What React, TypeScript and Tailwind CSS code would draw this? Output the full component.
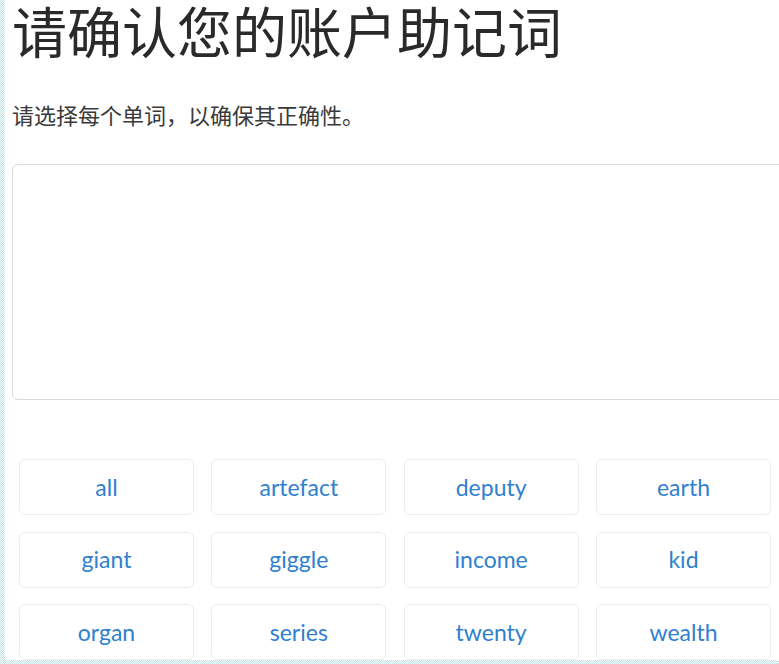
import React from "react";

const words = [
  "all", "artefact", "deputy", "earth",
  "giant", "giggle", "income", "kid",
  "organ", "series", "twenty", "wealth",
];

export default function App() {
  return (
    <div className="relative flex h-[664px] w-[779px] overflow-hidden bg-white">
      <div className="w-[5px] shrink-0 bg-[image:repeating-conic-gradient(#bfe0e0_0_25%,#ffffff_0_50%)] bg-[length:2px_2px]" />
      <div className="flex shrink-0 flex-col pl-[7px]">
        <h1
          className="m-0 mt-[-2px] h-[62px] text-[55px] leading-[62px] font-normal text-[#2a2a2a] whitespace-nowrap"
          style={{ fontFamily: '"Noto Sans CJK SC", "Noto Sans", sans-serif' }}
        >
          请确认您的账户助记词
        </h1>
        <p
          className="mt-[39px] h-[30px] text-[22px] leading-[30px] text-[#3a3a3a] whitespace-nowrap"
          style={{ fontFamily: '"Noto Sans CJK SC", "Noto Sans", sans-serif' }}
        >
          请选择每个单词，以确保其正确性。
        </p>
        <div className="mt-[35px] h-[236px] w-[800px] rounded-[6px] border border-[#dadada] bg-white" />
        <div
          className="mt-[59px] ml-[7px] grid w-[752px] grid-cols-4 gap-x-[17.3px] gap-y-[16.5px]"
          style={{ fontFamily: 'Lato, "Noto Sans", sans-serif' }}
        >
          {words.map((w) => (
            <button
              key={w}
              className="flex h-[56px] items-center justify-center rounded-[6px] border border-[#e7eef6] bg-white text-[23px] text-[#2f80cf]"
            >
              {w}
            </button>
          ))}
        </div>
      </div>
      <div className="absolute bottom-0 left-0 h-[4px] w-full bg-[image:repeating-conic-gradient(#bfe0e0_0_25%,#ffffff_0_50%)] bg-[length:2px_2px]" />
    </div>
  );
}
